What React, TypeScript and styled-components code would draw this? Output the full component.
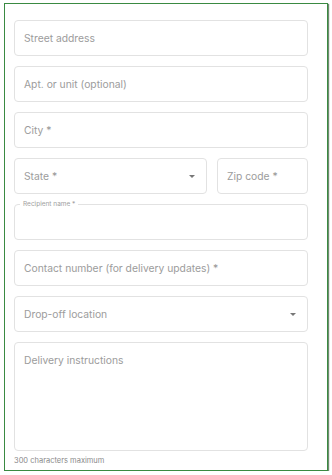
import React from "react"
import styled, { createGlobalStyle } from "styled-components"

const Global = createGlobalStyle`
  html, body {
    margin: 0;
    padding: 0;
    background: #ffffff;
    font-family: Inter, "Noto Sans", sans-serif;
  }
`

const Frame = styled.div`
  box-sizing: border-box;
  margin: 3px 0 0 4px;
  width: 324px;
  height: 468px;
  border: 1px solid #3a8a42;
  box-shadow: 1px 1px 1px rgba(20, 60, 20, 0.6);
  background: #fff;
  padding: 16px 19px 0 9px;
  display: flex;
  flex-direction: column;
  gap: 10px;
  & > * {
    flex-shrink: 0;
  }
`

const Row = styled.div`
  display: flex;
  gap: 10px;
`

const Box = styled.div<{ $w?: number }>`
  box-sizing: border-box;
  height: 36px;
  border: 1px solid #e2e2e2;
  border-radius: 4px;
  display: flex;
  align-items: center;
  padding: 0 11px 0 9px;
  font-size: 10.3px;
  color: #9c9c9c;
  ${(p) => (p.$w ? `width: ${p.$w}px; flex: none;` : "")}
  ${Row} > & {
    flex-grow: ${(p) => (p.$w ? 0 : 1)};
  }
`

const Text = styled.span`
  flex: 1;
`

const Caret = styled.span`
  width: 0;
  height: 0;
  border-left: 3px solid transparent;
  border-right: 3px solid transparent;
  border-top: 3px solid #777;
`

const Outlined = styled.fieldset`
  box-sizing: border-box;
  height: 40px;
  margin: -4px 0 0;
  border: 1px solid #e2e2e2;
  border-radius: 4px;
  padding: 0 8px;
  min-width: 0;
`

const Legend = styled.legend`
  font-size: 6.5px;
  color: #a0a0a0;
  padding: 0 3px;
  margin-left: -3px;
  line-height: 8px;
`

const Area = styled.div`
  box-sizing: border-box;
  height: 109px;
  border: 1px solid #e2e2e2;
  border-radius: 4px;
  padding: 11px 9px;
  font-size: 10.3px;
  color: #9c9c9c;
`

const Helper = styled.div`
  font-size: 7.5px;
  line-height: 9px;
  color: #8a8a8a;
  margin-top: -5px;
`

export default function App() {
  return (
    <>
      <Global />
      <Frame>
        <Box>Street address</Box>
        <Box>Apt. or unit (optional)</Box>
        <Box>City *</Box>
        <Row>
          <Box>
            <Text>State *</Text>
            <Caret />
          </Box>
          <Box $w={91}>Zip code *</Box>
        </Row>
        <Outlined>
          <Legend>Recipient name *</Legend>
        </Outlined>
        <Box>Contact number (for delivery updates) *</Box>
        <Box>
          <Text>Drop-off location</Text>
          <Caret />
        </Box>
        <Area>Delivery instructions</Area>
        <Helper>300 characters maximum</Helper>
      </Frame>
    </>
  )
}
